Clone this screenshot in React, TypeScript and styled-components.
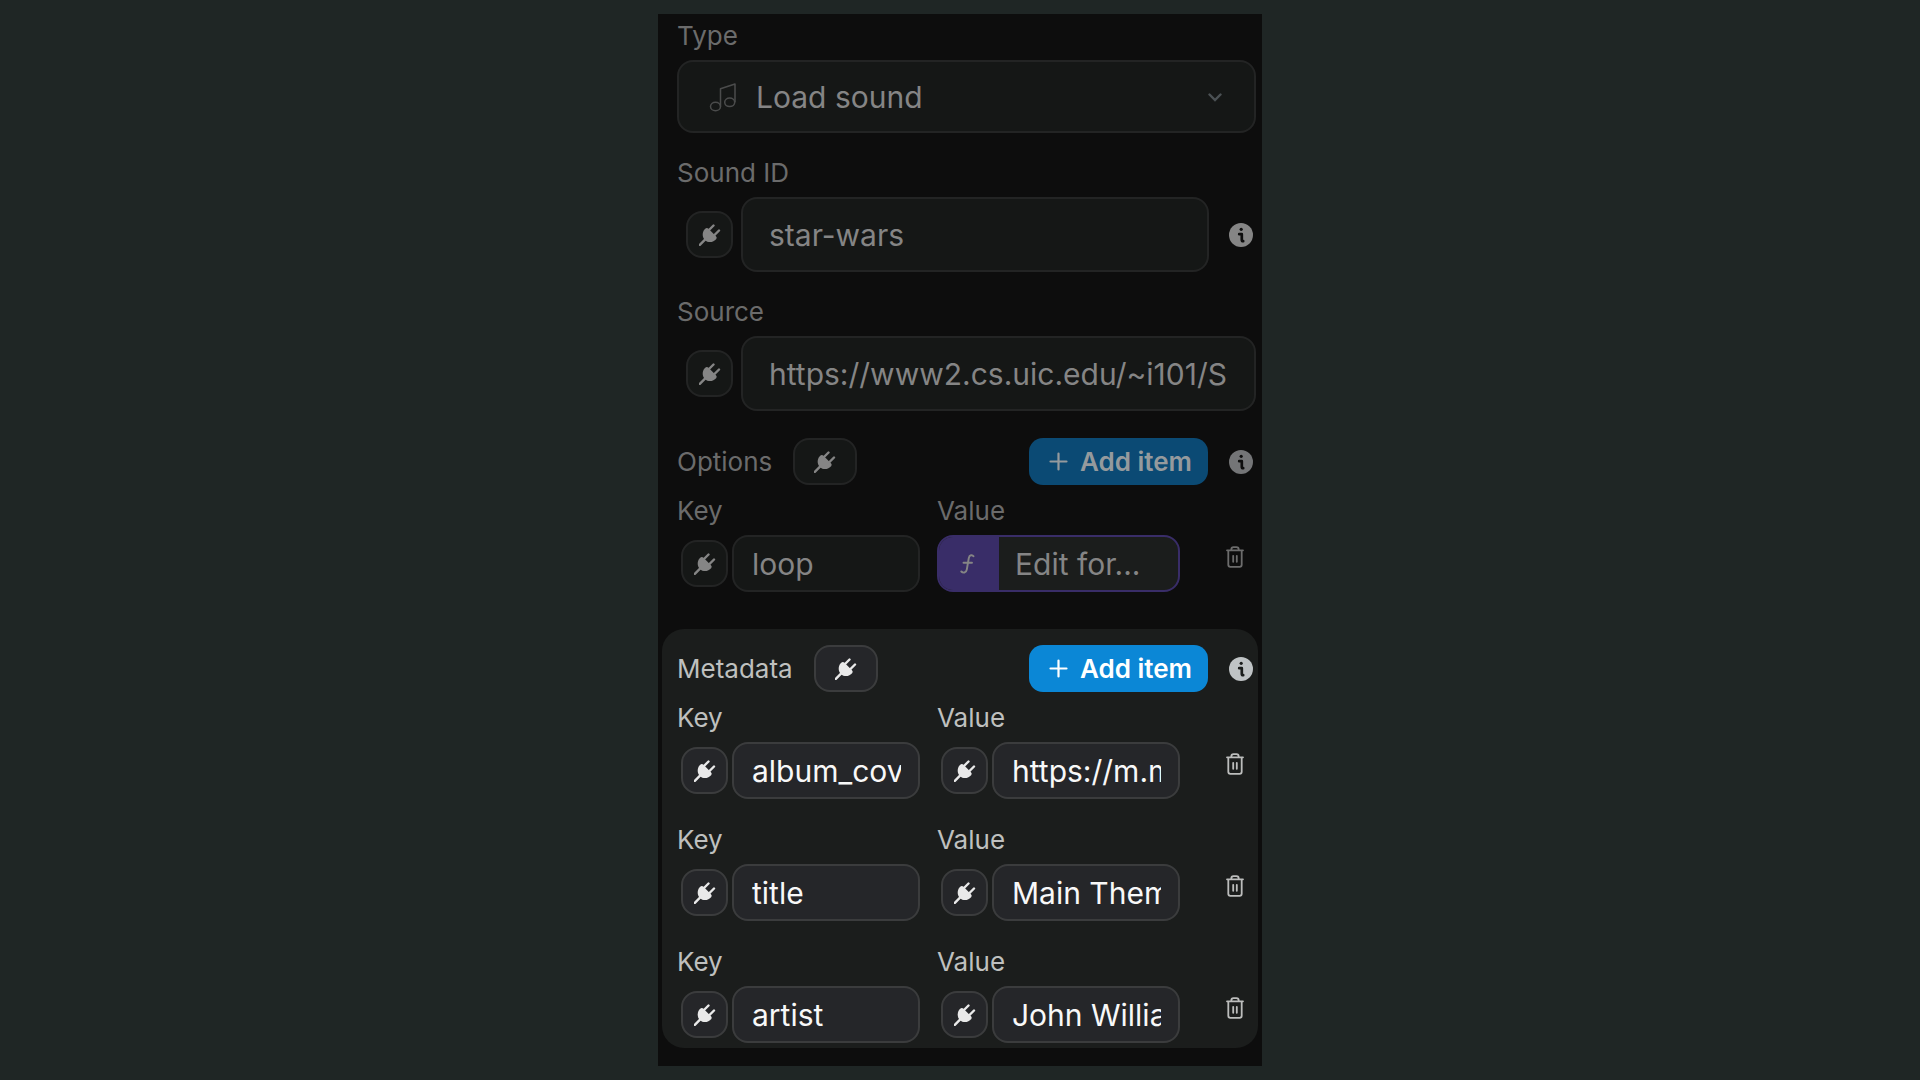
import React, { useId, useState } from "react";
import styled, { createGlobalStyle, ThemeProvider } from "styled-components";

const dimmed = {
  label: "#6b6b6b",
  text: "#858585",
  surface: "#151716",
  border: "#232424",
  accent: "#0b4a74",
  accentText: "#959a9d",
  icon: "#858585",
  info: "#747577",
  trash: "#6c6c6c",
  hole: "#0d0d0d",
};

const active = {
  label: "#bfc0bf",
  text: "#f8f8f8",
  surface: "#252629",
  border: "#3b3c3d",
  accent: "#0b87d6",
  accentText: "#ffffff",
  icon: "#e9e9e9",
  info: "#bfc3c5",
  trash: "#bcbdbc",
  hole: "#1b1d1c",
};

const GlobalStyle = createGlobalStyle`
  *, *::before, *::after { box-sizing: border-box; }
  body {
    margin: 0;
    background: #1f2625;
    font-family: Inter, "Liberation Sans", sans-serif;
  }
  button, input, select { font: inherit; margin: 0; }
  svg { display: block; flex: none; }
`;

const Page = styled.main`
  min-height: 100vh;
  display: flex;
  align-items: center;
  justify-content: center;
`;

const Panel = styled.form`
  width: 100%;
  max-width: 604px;
  padding: 6px 0 18px;
  background: #0d0d0d;
`;

const Section = styled.section`
  padding: 0 6px 3px 19px;
`;

const Highlight = styled.section`
  margin: 34px 4px 0;
  padding: 16px 2px 5px 15px;
  border-radius: 22px;
  background: #1b1d1c;
`;

const Label = styled.label`
  display: block;
  font-size: 26px;
  line-height: 32px;
  color: ${(p) => p.theme.label};
`;

const Title = styled.h2`
  margin: 0;
  font-size: 26px;
  font-weight: 400;
  line-height: 32px;
  color: ${(p) => p.theme.label};
`;

const Field = styled.div`
  display: flex;
  flex-direction: column;
  gap: 8px;
  margin-bottom: 24px;
`;

const SelectBox = styled.div`
  display: grid;
  grid-template-columns: 32px 1fr 48px;
  align-items: center;
  height: 73px;
  color: #4b4c4c;

  svg {
    grid-row: 1;
    z-index: 1;
    pointer-events: none;
  }
  svg:first-of-type { grid-column: 2; }
  svg:last-of-type { grid-column: 3; }
`;

const Select = styled.select`
  grid-area: 1 / 1 / 2 / 4;
  width: 100%;
  height: 100%;
  padding: 0 60px 0 77px;
  appearance: none;
  border: 2px solid ${(p) => p.theme.border};
  border-radius: 16px;
  background: ${(p) => p.theme.surface};
  color: ${(p) => p.theme.text};
  font-size: 30px;
`;

const InputRow = styled.div`
  display: flex;
  align-items: center;
  gap: 8px;
  padding-left: 9px;
`;

const WideInput = styled.input`
  flex: 1;
  min-width: 0;
  height: 75px;
  padding: 0 26px;
  border: 2px solid ${(p) => p.theme.border};
  border-radius: 16px;
  background: ${(p) => p.theme.surface};
  color: ${(p) => p.theme.text};
  font-size: 30px;
`;

const BindButton = styled.button<{ $wide?: boolean }>`
  display: flex;
  align-items: center;
  justify-content: center;
  flex: none;
  width: ${(p) => (p.$wide ? 64 : 47)}px;
  height: 47px;
  padding: 0;
  border: 2px solid ${(p) => p.theme.border};
  border-radius: 16px;
  background: ${(p) => p.theme.surface};
  color: ${(p) => p.theme.icon};
`;

const InfoButton = styled.button<{ $bright?: boolean }>`
  flex: none;
  margin: 0 3px 0 12px;
  padding: 0;
  border: 0;
  background: none;
  color: ${(p) => (p.$bright ? p.theme.icon : p.theme.info)};
`;

const GroupHeader = styled.div`
  display: flex;
  align-items: center;
  gap: 21px;
  margin-bottom: 10px;

  ${InfoButton} { margin-left: 0; }
`;

const AddButton = styled.button`
  display: flex;
  align-items: center;
  justify-content: center;
  gap: 12px;
  width: 179px;
  height: 47px;
  margin-left: auto;
  padding: 0 0 0 4px;
  border: 0;
  border-radius: 14px;
  background: ${(p) => p.theme.accent};
  color: ${(p) => p.theme.accentText};
  font-size: 26px;
  font-weight: 600;
`;

const Pair = styled.div`
  display: grid;
  grid-template-columns: 1fr 1fr 59px;
  column-gap: 17px;

  & + & { margin-top: 25px; }
`;

const Cell = styled.div`
  display: flex;
  flex-direction: column;
  gap: 8px;
  min-width: 0;
`;

const CellRow = styled.div`
  display: flex;
  align-items: center;
  gap: 4px;
  padding-left: 4px;
`;

const SmallInput = styled.input`
  flex: 1;
  min-width: 0;
  height: 57px;
  padding: 0 17px 0 18px;
  border: 2px solid ${(p) => p.theme.border};
  border-radius: 16px;
  background: ${(p) => p.theme.surface};
  color: ${(p) => p.theme.text};
  font-size: 30px;
`;

const FormulaButton = styled.button`
  display: flex;
  align-items: stretch;
  height: 57px;
  padding: 0;
  overflow: hidden;
  border: 2px solid #392d68;
  border-radius: 16px;
  background: #1b1d1c;
  color: ${(p) => p.theme.text};
  font-size: 30px;
`;

const FormulaMark = styled.span`
  display: flex;
  align-items: center;
  justify-content: center;
  width: 60px;
  padding-right: 4px;
  background: #392d68;
`;

const FormulaText = styled.span`
  align-self: center;
  padding-left: 16px;
`;

const TrashButton = styled.button`
  display: flex;
  align-items: center;
  justify-content: center;
  align-self: end;
  justify-self: end;
  width: 42px;
  height: 44px;
  margin-bottom: 13px;
  padding: 0;
  border: 0;
  background: none;
  color: ${(p) => p.theme.trash};
`;

const Plug = () => (
  <svg width="22" height="22" viewBox="0 0 22 22" aria-hidden="true">
    <path d="M.8 20.800 6 15.600M10 6 14.500 1.500M15 11.500 20 6.500" fill="none" stroke="currentColor" strokeWidth="2.400" strokeLinecap="round" />
    <path d="M6.800 4.300Q8.200 3.400 9.500 4.700L17 12.200Q18.200 13.500 17.300 15C14.500 18.500 9.300 19.200 6 16.200 2.600 12.800 3 7.200 6.800 4.300Z" fill="currentColor" />
  </svg>
);

const Note = () => (
  <svg width="28" height="30" viewBox="0 0 28 30" fill="none" stroke="currentColor" strokeWidth="1.500" aria-hidden="true">
    <ellipse cx="6.500" cy="24.500" rx="5" ry="4.300" />
    <ellipse cx="20.700" cy="20.300" rx="5" ry="4.300" />
    <path d="M11.500 24.500V6.800L26 2V20.300" strokeLinejoin="round" />
  </svg>
);

const Chevron = () => (
  <svg width="14" height="10" viewBox="0 0 14 10" fill="none" aria-hidden="true">
    <path d="m1.500 2.500 5.500 5.500L12.500 2.500" stroke="#4b5154" strokeWidth="2.400" strokeLinecap="round" />
  </svg>
);

const Info = ({ hole }: { hole: string }) => (
  <svg width="24" height="24" viewBox="0 0 24 24" aria-hidden="true">
    <circle cx="12" cy="12" r="12" fill="currentColor" />
    <circle cx="12.200" cy="6.300" r="1.600" fill={hole} />
    <path d="M10.200 11.200h2.600v5.800q0 1.200 1.400 1.200" fill="none" stroke={hole} strokeWidth="2.700" strokeLinecap="round" strokeLinejoin="round" />
  </svg>
);

const Plus = () => (
  <svg width="19" height="19" viewBox="0 0 19 19" aria-hidden="true">
    <path d="M9.500 1.500v16M1.500 9.500h16" stroke="currentColor" strokeWidth="2.200" strokeLinecap="round" />
  </svg>
);

const Trash = () => (
  <svg width="18" height="22" viewBox="0 0 18 22" fill="none" stroke="currentColor" strokeWidth="1.800" strokeLinecap="round" strokeLinejoin="round" aria-hidden="true">
    <path d="M1 4.300h16M5.300 4V3.600Q5.300 1.200 7.500 1.200h3q2.200 0 2.200 2.400V4M2.300 4.500V18.800Q2.300 20.800 4.300 20.800h9.400q2 0 2-2V4.500M7.200 9.800v6M10.800 9.800v6" />
  </svg>
);

const FunctionMark = () => (
  <svg width="15" height="20" viewBox="0 0 15 20" fill="none" stroke="currentColor" strokeWidth="1.900" strokeLinecap="round" aria-hidden="true">
    <path d="M13.500 2.300C12.500.7 9.500.6 8.800 4L6.800 15.500C6.200 19 3 19.300 1.300 17.500M3.500 8.800h8.500" />
  </svg>
);

const Bind = ({ wide, name }: { wide?: boolean; name: string }) => (
  <BindButton type="button" $wide={wide} aria-label={`Bind ${name}`}>
    <Plug />
  </BindButton>
);

const TextCell = ({ label, initial }: { label: string; initial: string }) => {
  const id = useId();
  const [value, setValue] = useState(initial);
  return (
    <Cell>
      <Label htmlFor={id}>{label}</Label>
      <CellRow>
        <Bind name={label} />
        <SmallInput id={id} value={value} onChange={(e) => setValue(e.target.value)} />
      </CellRow>
    </Cell>
  );
};

const TextField = ({ label, initial, info }: { label: string; initial: string; info?: boolean }) => {
  const id = useId();
  const [value, setValue] = useState(initial);
  return (
    <Field>
      <Label htmlFor={id}>{label}</Label>
      <InputRow>
        <Bind name={label} />
        <WideInput id={id} value={value} onChange={(e) => setValue(e.target.value)} />
        {info && (
          <InfoButton type="button" $bright aria-label={`About ${label}`}>
            <Info hole={dimmed.hole} />
          </InfoButton>
        )}
      </InputRow>
    </Field>
  );
};

const Header = ({ title, hole }: { title: string; hole: string }) => (
  <GroupHeader>
    <Title>{title}</Title>
    <Bind wide name={title} />
    <AddButton type="button">
      <Plus />
      Add item
    </AddButton>
    <InfoButton type="button" aria-label={`About ${title}`}>
      <Info hole={hole} />
    </InfoButton>
  </GroupHeader>
);

const Remove = () => (
  <TrashButton type="button" aria-label="Remove item">
    <Trash />
  </TrashButton>
);

const metadata = [
  ["album_cover", "https://m.media-amazon.com/images"],
  ["title", "Main Theme"],
  ["artist", "John Williams"],
];

export default function App() {
  return (
    <Page>
      <GlobalStyle />
      <Panel>
        <ThemeProvider theme={dimmed}>
          <Section>
            <Field>
              <Label htmlFor="type">Type</Label>
              <SelectBox>
                <Select id="type" defaultValue="load">
                  <option value="load">Load sound</option>
                </Select>
                <Note />
                <Chevron />
              </SelectBox>
            </Field>
            <TextField label="Sound ID" initial="star-wars" info />
            <TextField label="Source" initial="https://www2.cs.uic.edu/~i101/SoundFiles/StarWars60.wav" />
          </Section>
          <Section>
            <Header title="Options" hole={dimmed.hole} />
            <Pair>
              <TextCell label="Key" initial="loop" />
              <Cell>
                <Label htmlFor="formula">Value</Label>
                <FormulaButton id="formula" type="button">
                  <FormulaMark>
                    <FunctionMark />
                  </FormulaMark>
                  <FormulaText>Edit for...</FormulaText>
                </FormulaButton>
              </Cell>
              <Remove />
            </Pair>
          </Section>
        </ThemeProvider>
        <ThemeProvider theme={active}>
          <Highlight>
            <Header title="Metadata" hole={active.hole} />
            {metadata.map(([key, value]) => (
              <Pair key={key}>
                <TextCell label="Key" initial={key} />
                <TextCell label="Value" initial={value} />
                <Remove />
              </Pair>
            ))}
          </Highlight>
        </ThemeProvider>
      </Panel>
    </Page>
  );
}
